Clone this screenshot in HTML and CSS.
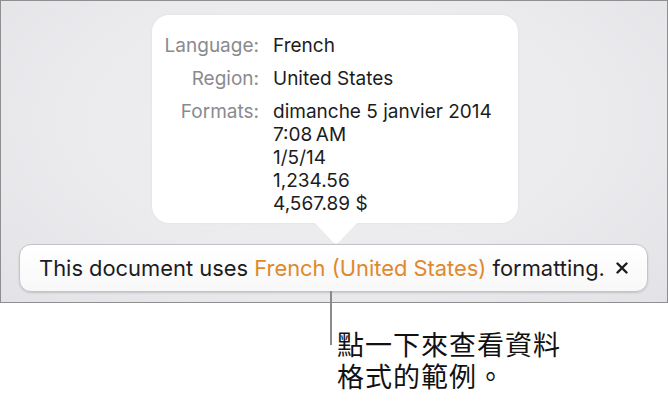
FILE: index.html
```html
<!DOCTYPE html>
<html lang="en">
<head>
<meta charset="utf-8">
<title>Formatting</title>
<link rel="stylesheet" href="styles.css">
</head>
<body>
<div class="page">
  <div class="screen">
    <div class="popover">
      <div class="row">
        <div class="label">Language:</div>
        <div class="value">French</div>
      </div>
      <div class="row">
        <div class="label">Region:</div>
        <div class="value">United States</div>
      </div>
      <div class="row">
        <div class="label">Formats:</div>
        <div class="value lines">
          <span>dimanche 5 janvier 2014</span>
          <span>7:08&#8201;AM</span>
          <span>1/5/14</span>
          <span>1,234.56</span>
          <span>4,567.89 $</span>
        </div>
      </div>
      <svg class="arrow" width="44" height="22" viewBox="0 0 44 22">
        <path d="M0 0 L18.5 19.5 Q22 23 25.5 19.5 L44 0 Z" fill="#ffffff"/>
      </svg>
    </div>
    <div class="bar">
      <span class="msg">This document uses <span class="accent">French (United States)</span> formatting.</span>
      <svg class="close" width="12" height="12" viewBox="0 0 12 12">
        <path d="M1.5 1.5 L10.5 10.5 M10.5 1.5 L1.5 10.5" stroke="#1c1c1e" stroke-width="2.4" stroke-linecap="round"/>
      </svg>
    </div>
  </div>
  <div class="leader"></div>
  <div class="callout">點一下來查看資料<br>格式的範例。</div>
</div>
</body>
</html>
```
FILE: styles.css
```css
html, body {
  margin: 0;
  padding: 0;
  background: #ffffff;
}
.page {
  position: relative;
  width: 668px;
  height: 402px;
  font-family: Inter, "Liberation Sans", Arial, sans-serif;
}
.screen {
  box-sizing: border-box;
  width: 668px;
  height: 303px;
  border: 1px solid #8f8f92;
  background: radial-gradient(ellipse at 50% 40%, #efeff2 0%, #ebebee 55%, #e3e3e7 100%);
  display: flex;
  flex-direction: column;
  align-items: center;
  padding-top: 14px;
}
.popover {
  position: relative;
  box-sizing: border-box;
  width: 366px;
  height: 208px;
  margin-left: 2px;
  background: #ffffff;
  border-radius: 17px;
  box-shadow: 0 0 3px rgba(0, 0, 0, 0.06);
  padding: 19px 0 0 0;
  display: flex;
  flex-direction: column;
  gap: 10px;
}
.row {
  display: flex;
  align-items: flex-start;
  font-size: 19px;
  line-height: 23px;
}
.label {
  width: 107px;
  text-align: right;
  color: #8a8a8e;
  padding-right: 14px;
}
.value {
  color: #1c1c1e;
}
.lines {
  display: flex;
  flex-direction: column;
}
.arrow {
  position: absolute;
  left: 162px;
  top: 207px;
}
.bar {
  box-sizing: border-box;
  width: 629px;
  height: 48px;
  margin-top: 21px;
  margin-left: -1px;
  border: 1px solid #c4c4c8;
  border-radius: 12px;
  background: linear-gradient(#ffffff, #f8f8f9);
  box-shadow: 0 1px 2px rgba(0, 0, 0, 0.15);
  display: flex;
  align-items: center;
  padding: 0 19px 0 19px;
  justify-content: space-between;
}
.msg {
  font-size: 21.9px;
  color: #1c1c1e;
  white-space: nowrap;
}
.accent {
  color: #e0892c;
}
.close {
  display: block;
}
.leader {
  position: absolute;
  left: 330px;
  top: 291px;
  width: 2px;
  height: 54px;
  background: #8a8a8c;
}
.callout {
  margin: 25px 0 0 337px;
  font-family: "Noto Sans CJK TC", "Noto Sans CJK SC", sans-serif;
  font-size: 27px;
  line-height: 32px;
  color: #111111;
  letter-spacing: 1px;
}
```
